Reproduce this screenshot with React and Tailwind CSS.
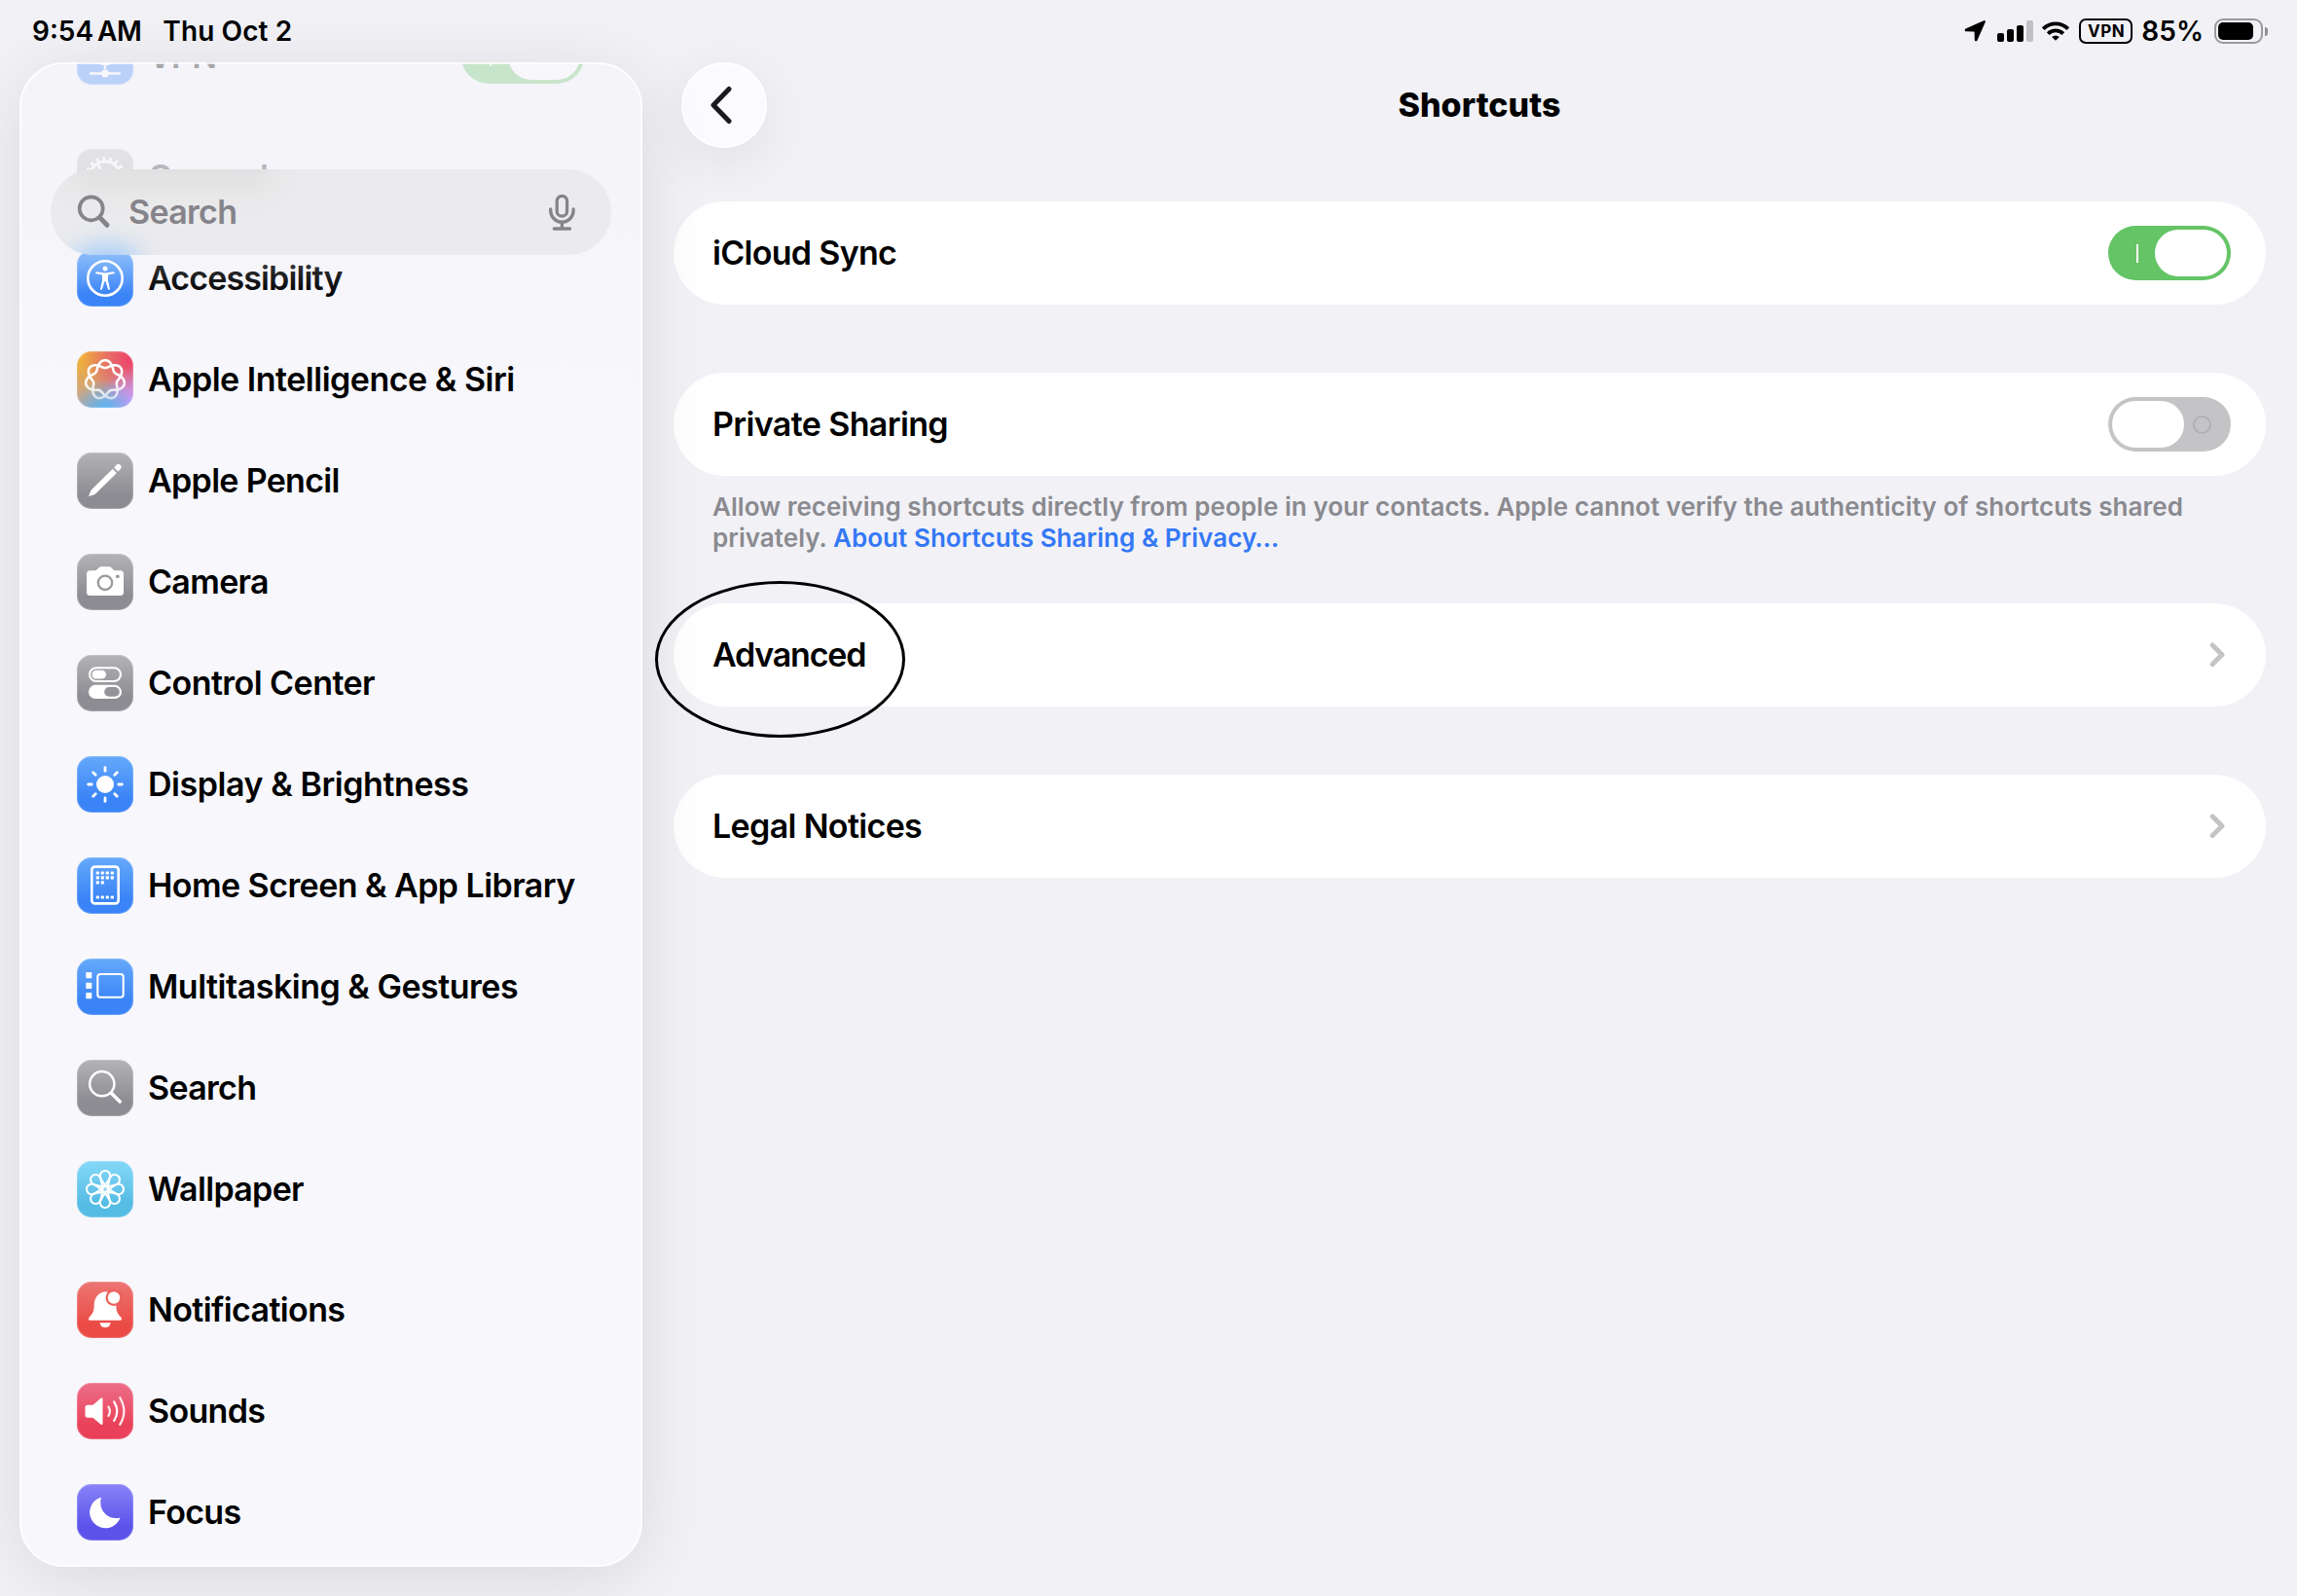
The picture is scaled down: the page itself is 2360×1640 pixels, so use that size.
import React from "react";

const GRAY = "bg-linear-to-b from-[#b3b3b7] to-[#8d8c92] to-75%";
const BLUE = "bg-linear-to-b from-[#65a9fa] to-[#3a84f7] to-75%";

function Glyph({ children }) {
  return (
    <svg viewBox="0 0 58 58" className="size-full" fill="none" stroke="none">
      {children}
    </svg>
  );
}

// Seven-lobed knot: one closed wave that runs twice around the centre.
const KNOT = (() => {
  const points = [];
  for (let i = 0; i < 280; i++) {
    const t = (i / 280) * Math.PI * 4;
    const r = 16.2 + 4 * Math.cos(3.5 * t);
    points.push(`${(29 + r * Math.sin(t)).toFixed(2)} ${(29.3 - r * Math.cos(t)).toFixed(2)}`);
  }
  return `M${points.join("L")}Z`;
})();

const ANGLES = [0, 45, 90, 135, 180, 225, 270, 315];

function VpnGlyph() {
  return (
    <Glyph>
      <g stroke="#fff" strokeWidth="2.4">
        <circle cx="29" cy="24" r="13" />
        <ellipse cx="29" cy="24" rx="6" ry="13" />
        <path d="M16 24h26M29 11v31" />
        <path d="M14 46.5h30" strokeLinecap="round" />
      </g>
      <circle cx="29" cy="46.5" r="3.9" fill="#fff" />
    </Glyph>
  );
}

function GearGlyph() {
  return (
    <Glyph>
      <g stroke="#fff">
        <circle cx="29" cy="29" r="16" strokeWidth="3" />
        <circle cx="29" cy="29" r="19" strokeWidth="4" strokeDasharray="3 3.63" />
        <path d="M29 29 21 15M29 29l-8 14M29 29h16" strokeWidth="2.6" />
      </g>
    </Glyph>
  );
}

function AccessibilityGlyph() {
  return (
    <Glyph>
      <circle cx="29" cy="29" r="17.7" stroke="#fff" strokeWidth="2.6" />
      <circle cx="29" cy="19.1" r="2.5" fill="#fff" />
      <path
        d="M20.2 22.3 29 23.6l8.8-1.3q1 0 1 .9t-.9 1L32 25.6v6l1.9 8.2q0 1-.8 1.1t-1.1-.8L29.4 32h-.8L26 40.1q-.3.9-1.1.8t-.8-1.1L26 31.6v-6l-5.9-1.4q-.9-.1-.9-1t1-.9z"
        fill="#fff"
      />
    </Glyph>
  );
}

function KnotGlyph() {
  return (
    <Glyph>
      <defs>
        <linearGradient id="knot-fade" x1="0" y1="8" x2="0" y2="50" gradientUnits="userSpaceOnUse">
          <stop offset="0" stopColor="#fff" />
          <stop offset="0.55" stopColor="#fff" stopOpacity="0.95" />
          <stop offset="1" stopColor="#fff" stopOpacity="0.6" />
        </linearGradient>
      </defs>
      <path d={KNOT} stroke="url(#knot-fade)" strokeWidth="2.6" />
    </Glyph>
  );
}

function PencilGlyph() {
  return (
    <Glyph>
      <path
        d="M12.6 44.5 15 38.6 36.6 17.3l3.9 3.8L18.6 42.6Z"
        fill="#fff"
        stroke="#fff"
        strokeWidth="0.8"
        strokeLinejoin="round"
      />
      <path d="M38.2 15.4l2.2-2.5a3 3 0 0 1 4.3 4.2l-2.5 2.3z" fill="#fff" />
    </Glyph>
  );
}

function CameraGlyph() {
  return (
    <Glyph>
      <path
        d="M13.5 17.2h5.2q1.2 0 2-.9l1.7-1.9q1.1-1.2 2.7-1.2h7.8q1.6 0 2.7 1.2l1.7 1.9q.8.9 2 .9h5.2q3.5 0 3.5 3.5v18.8q0 3.5-3.5 3.5h-31q-3.5 0-3.5-3.5V20.7q0-3.5 3.5-3.5z"
        fill="#fff"
      />
      <circle cx="29" cy="29.8" r="7.2" stroke="#9a999e" strokeWidth="2.3" />
      <circle cx="41.8" cy="23.3" r="1.9" fill="#9a999e" />
    </Glyph>
  );
}

function ControlsGlyph() {
  return (
    <Glyph>
      <rect x="13" y="13.2" width="32" height="13.8" rx="6.9" stroke="#fff" strokeWidth="2.1" />
      <rect x="15.5" y="15.8" width="14.5" height="8.6" rx="4.3" fill="#fff" />
      <rect x="12" y="30.8" width="34" height="14.2" rx="7.1" fill="#fff" />
      <rect x="28.2" y="33" width="15.6" height="9.8" rx="4.9" fill="#949398" />
    </Glyph>
  );
}

function SunGlyph() {
  return (
    <Glyph>
      <circle cx="29" cy="29" r="9" fill="#fff" />
      {ANGLES.map((a) => (
        <path
          key={a}
          d="M29 11.6v3.6"
          stroke="#fff"
          strokeWidth="2.8"
          strokeLinecap="round"
          transform={`rotate(${a} 29 29)`}
        />
      ))}
    </Glyph>
  );
}

const APP_DOTS = [
  [21.3, 16], [26.3, 16], [31.3, 16], [36.3, 16],
  [21.3, 20.9], [26.3, 20.9], [31.3, 20.9], [36.3, 20.9],
  [21.3, 25.8], [26.3, 25.8],
  [21.3, 41], [26.3, 41], [31.3, 41], [36.3, 41],
];

function HomeScreenGlyph() {
  return (
    <Glyph>
      <rect x="15.3" y="9.6" width="27.4" height="37.8" rx="3.2" stroke="#fff" strokeWidth="2.6" />
      {APP_DOTS.map(([x, y]) => (
        <rect key={`${x}-${y}`} x={x - 1.6} y={y - 1.6} width="3.2" height="3.2" rx="0.5" fill="#fff" />
      ))}
    </Glyph>
  );
}

function MultitaskGlyph() {
  return (
    <Glyph>
      <rect x="9.3" y="14" width="6" height="6.2" rx="0.8" fill="#fff" />
      <rect x="9.3" y="24.8" width="6" height="6.2" rx="0.8" fill="#fff" />
      <rect x="9.3" y="35" width="6" height="6.2" rx="0.8" fill="#fff" />
      <rect x="21.3" y="16" width="26.4" height="23.8" rx="2.8" stroke="#fff" strokeWidth="2.1" />
    </Glyph>
  );
}

function SearchGlyph() {
  return (
    <Glyph>
      <circle cx="25.8" cy="24.7" r="12.6" stroke="#fff" strokeWidth="2.5" />
      <path d="M35.6 34.4 44.2 43" stroke="#fff" strokeWidth="3.6" strokeLinecap="round" />
    </Glyph>
  );
}

function FlowerGlyph() {
  return (
    <Glyph>
      <g stroke="#fff" strokeWidth="2.1">
        {ANGLES.map((a) => (
          <path
            key={a}
            d="M0-3.5C-1.5-7.5-5.2-10-5.2-13.8a5.2 5.2 0 0 1 10.4 0C5.2-10 1.5-7.5 0-3.5Z"
            transform={`translate(29 29) rotate(${a})`}
          />
        ))}
        <circle cx="29" cy="29" r="3.3" />
      </g>
    </Glyph>
  );
}

function BellGlyph() {
  return (
    <Glyph>
      <path
        d="M29 10.2C22 11 17.8 16.8 17.7 23.8c-.1 6.7-1.4 9-4.7 12.5-1.7 1.9-1 3.5 1 3.5h30c2 0 2.7-1.6 1-3.5-3.3-3.5-4.6-5.8-4.7-12.5C40.2 16.8 36 11 29 10.2z"
        fill="#fff"
      />
      <path d="M23.6 42.2h11q-.6 4.9-5.5 4.9t-5.5-4.9z" fill="#fff" />
      <circle cx="38" cy="16.5" r="8.4" fill="#eb615d" />
      <circle cx="38" cy="16.5" r="6.2" fill="#fff" />
    </Glyph>
  );
}

function SpeakerGlyph() {
  return (
    <Glyph>
      <path
        d="M11 22.7h4.8q.8 0 1.5-.6l7-6.2q2.2-1.6 2.2.8v25q0 2.3-2.2.7l-7-6q-.7-.7-1.5-.7H11q-2.5 0-2.5-2.5v-8q0-2.5 2.5-2.5z"
        fill="#fff"
      />
      <g stroke="#fff" strokeWidth="2.2" strokeLinecap="round">
        <path d="M32.4 24.5q3 4.6 0 9.4" strokeOpacity="0.9" />
        <path d="M38.2 19.4q6.2 9.8 0 19.5" />
        <path d="M44.2 15.2q8.4 14 0 27.6" strokeOpacity="0.9" />
      </g>
    </Glyph>
  );
}

function MoonGlyph() {
  return (
    <Glyph>
      <path
        d="M24.3 13.7A16.2 16.2 0 1 0 44.6 34.6C33 37.5 21.5 28 24.9 13.8Q24.8 13.3 24.3 13.7Z"
        fill="#fff"
      />
    </Glyph>
  );
}

const SIRI_BG =
  "bg-[radial-gradient(circle_at_50%_105%,#55b4f8_0%,#55b4f800_48%),radial-gradient(circle_at_100%_88%,#cf98ff_0%,#cf98ff00_45%),radial-gradient(circle_at_98%_12%,#f03f68_0%,#f03f6800_68%),radial-gradient(circle_at_5%_8%,#f2b136_0%,#f2b13600_80%),linear-gradient(#cf8f80,#a9a9c0)]";

const ROWS = [
  { label: "VPN", bg: BLUE, Icon: VpnGlyph, toggle: true, gapAfter: true },
  { label: "General", bg: GRAY, Icon: GearGlyph },
  { label: "Accessibility", bg: BLUE, Icon: AccessibilityGlyph, tracking: "tracking-[-0.87px]" },
  { label: "Apple Intelligence & Siri", bg: SIRI_BG, Icon: KnotGlyph, tracking: "tracking-[-0.49px]" },
  { label: "Apple Pencil", bg: GRAY, Icon: PencilGlyph },
  { label: "Camera", bg: GRAY, Icon: CameraGlyph },
  { label: "Control Center", bg: GRAY, Icon: ControlsGlyph, tracking: "tracking-[-0.55px]" },
  { label: "Display & Brightness", bg: BLUE, Icon: SunGlyph, tracking: "tracking-[-0.44px]" },
  { label: "Home Screen & App Library", bg: BLUE, Icon: HomeScreenGlyph, tracking: "tracking-[-0.55px]" },
  { label: "Multitasking & Gestures", bg: BLUE, Icon: MultitaskGlyph, tracking: "tracking-[-0.49px]" },
  { label: "Search", bg: GRAY, Icon: SearchGlyph },
  { label: "Wallpaper", bg: "bg-linear-to-b from-[#84d8f8] to-[#55bce4] to-75%", Icon: FlowerGlyph, gapAfter: true },
  { label: "Notifications", bg: "bg-linear-to-b from-[#ec7572] to-[#eb4b46] to-75%", Icon: BellGlyph, tracking: "tracking-[-0.62px]" },
  { label: "Sounds", bg: "bg-linear-to-b from-[#ec6d88] to-[#ea4059] to-75%", Icon: SpeakerGlyph },
  { label: "Focus", bg: "bg-linear-to-b from-[#8a82f8] to-[#5c52ea] to-75%", Icon: MoonGlyph },
];

function Toggle({ on }) {
  return on ? (
    <span className="flex h-14 w-[126px] items-center justify-between rounded-full bg-[#65c466] pr-1 pl-[29px]">
      <span className="h-[19px] w-[2px] bg-white" />
      <span className="h-12 w-[74px] rounded-full bg-white" />
    </span>
  ) : (
    <span className="flex h-14 w-[126px] items-center justify-between rounded-full bg-[#c4c4c6] pr-[20.5px] pl-1">
      <span className="h-12 w-[74px] rounded-full bg-white" />
      <span className="size-[19px] rounded-full border-2 border-[#b1b1b3]" />
    </span>
  );
}

function SidebarRow({ label, bg, Icon, toggle, gapAfter, tracking }) {
  return (
    <li className={`flex h-[104px] shrink-0 items-center pr-[60px] pl-[59px] ${gapAfter ? "mb-5" : ""}`}>
      <span className={`size-[58px] overflow-hidden rounded-[15px] shadow-[inset_0_0_1px_1px_rgba(255,255,255,0.22)] ${bg}`}>
        <Icon />
      </span>
      <span className={`ml-[15px] flex-1 pb-[2px] whitespace-nowrap ${tracking || "tracking-[-0.68px]"}`}>{label}</span>
      {toggle && <Toggle on />}
    </li>
  );
}

function SearchField() {
  return (
    <div className="absolute top-[110px] left-8 flex h-[88px] w-[576px] items-center overflow-hidden rounded-full bg-[#ebebed] pl-[27px] text-[#85848a]">
      <span className="absolute -top-5 left-5 h-10 w-[210px] rounded-full bg-[#d8d8db]/60 blur-[14px]" />
      <span className="absolute -bottom-6 left-6 h-8 w-[66px] rounded-full bg-[#9cc8fa] blur-[13px]" />
      <svg viewBox="0 0 36 36" className="relative size-9" fill="none" stroke="currentColor">
        <circle cx="14.7" cy="14.3" r="12" strokeWidth="3.7" />
        <path d="m23.7 23.6 7.3 7.7" strokeWidth="5" strokeLinecap="round" />
      </svg>
      <span className="relative ml-[17px] flex-1 pb-[2px] tracking-[-0.68px]">Search</span>
      <svg viewBox="0 0 29 38" className="relative mr-9 h-[38px] w-[29px]" fill="none" stroke="currentColor" strokeWidth="3.3" strokeLinecap="round">
        <rect x="9.2" y="2.3" width="10.4" height="20.8" rx="5.2" />
        <path d="M2.7 15.8v1.7a11.7 11.7 0 0 0 23.4 0v-1.7M14.4 29.5v6M6.3 36h16.2" />
      </svg>
    </div>
  );
}

function Sidebar() {
  return (
    <aside className="relative z-10 ml-5 h-[1546px] w-[640px] shrink-0 rounded-[46px] bg-linear-to-b from-[#f4f4f9] to-[#f7f7fc] to-25% shadow-[0_12px_72px_rgba(0,0,0,0.1)]">
      <div className="size-full overflow-hidden rounded-[46px]">
        <ul className="-mt-[58px] flex flex-col">
          {ROWS.map((row) => (
            <SidebarRow key={row.label + row.bg} {...row} />
          ))}
        </ul>
      </div>
      <div className="pointer-events-none absolute inset-x-0 top-0 h-[240px] rounded-t-[46px] bg-linear-to-b from-[#f4f4f9]/68 via-[#f4f4f9]/76 via-50% to-[#f4f4f9]/0" />
      <div className="pointer-events-none absolute inset-0 rounded-[46px] border-2 border-white/80" />
      <SearchField />
    </aside>
  );
}

function StatusBar() {
  return (
    <header className="flex h-16 shrink-0 items-center justify-between pr-[30px] pl-[33px] text-[28px] leading-[64px] font-[620]">
      <div className="flex">
        <span>9:54</span>
        <span className="ml-[4px] tracking-[-0.5px]">AM</span>
        <span className="ml-[22px] tracking-[0.1px]">Thu Oct 2</span>
      </div>
      <div className="flex items-center">
        <svg viewBox="0 0 24 24" className="size-6">
          <path d="M21.2 1.2c1.2-.5 2 .3 1.5 1.5l-8.2 18.7c-.7 1.4-2.6 1.1-2.7-.5l-.2-7.8-.6-.6-7.9-.2c-1.6-.1-2-2-.5-2.7z" />
        </svg>
        <span className="ml-[11px] flex h-[22px] items-end gap-[3px]">
          <span className="h-[9px] w-[7px] rounded-[2px] bg-black" />
          <span className="h-[13px] w-[7px] rounded-[2px] bg-black" />
          <span className="h-[17px] w-[7px] rounded-[2px] bg-black" />
          <span className="h-[22px] w-[7px] rounded-[2px] bg-[#c1c0c5]" />
        </span>
        <svg viewBox="0 0 30 22" className="ml-2 h-[22px] w-[30px]" fill="none" stroke="#000" strokeWidth="3.8">
          <path d="M2.2 8.6a18.2 18.2 0 0 1 25.6 0M7.2 13.6a11.2 11.2 0 0 1 15.6 0" />
          <path d="m15 20.8-3.9-3.7a5.6 5.6 0 0 1 7.8 0z" fill="#000" stroke="none" />
        </svg>
        <span className="ml-[9px] flex h-[26px] w-[55px] items-center justify-center rounded-[7px] border-2 border-black text-[17px] leading-none font-bold">
          <span className="-mr-[0.6px] tracking-[0.6px]">VPN</span>
        </span>
        <span className="ml-[9px]">85%</span>
        <span className="ml-[11px] flex h-[26px] w-[50px] items-center rounded-[9px] border-2 border-[#9a9a9d] pl-[2px]">
          <span className="h-[18px] w-9 rounded-[5px] bg-black" />
        </span>
        <span className="ml-[2px] h-[9px] w-[3px] rounded-r-full bg-[#8f8f92]" />
      </div>
    </header>
  );
}

function Chevron() {
  return (
    <svg viewBox="0 0 16 26" className="mr-1.5 h-[26px] w-4" fill="none" stroke="#c4c4c6" strokeWidth="5" strokeLinecap="round" strokeLinejoin="round">
      <path d="m3.2 3 9.8 9.8L3.2 22.6" />
    </svg>
  );
}

function Card({ label, tracking, children }) {
  return (
    <div className="relative flex h-[106px] items-center justify-between rounded-full bg-white pr-9 pl-10">
      <span className={`pb-[2px] ${tracking}`}>{label}</span>
      {children}
    </div>
  );
}

function Detail() {
  return (
    <main className="ml-5 flex flex-1 flex-col">
      <div className="grid grid-cols-[1fr_auto_1fr] items-center px-5">
        <button className="flex size-[88px] items-center justify-center rounded-full border-2 border-white bg-[#fbfbff] shadow-[0_14px_60px_rgba(0,0,0,0.08)]">
          <svg viewBox="0 0 24 40" className="-ml-[6px] h-10 w-6" fill="none" stroke="#1b1b1f" strokeWidth="5" strokeLinecap="round" strokeLinejoin="round">
            <path d="M20 3.5 4 20l16 16.5" />
          </svg>
        </button>
        <h1 className="pb-[2px] text-[34px] font-extrabold">Shortcuts</h1>
      </div>
      <div className="mt-[55px] mr-8 ml-3 flex flex-col">
        <Card label="iCloud Sync" tracking="tracking-[-0.7px]">
          <Toggle on />
        </Card>
        <div className="mt-[70px]">
          <Card label="Private Sharing" tracking="tracking-[-0.63px]">
            <Toggle />
          </Card>
          <p className="mt-4 h-[115px] pl-10 text-[26px] leading-8 tracking-[0.05px] text-[#8a8a8f]">
            Allow receiving shortcuts directly from people in your contacts. Apple cannot verify the authenticity of shortcuts shared
            <br />
            privately. <a className="text-[#3478f6]">About Shortcuts Sharing &amp; Privacy…</a>
          </p>
        </div>
        <Card label="Advanced" tracking="tracking-[-1.2px]">
          <Chevron />
          <span className="absolute -top-[23px] -left-[19px] h-[161px] w-[257px] rounded-[50%] border-[3px] border-black" />
        </Card>
        <div className="mt-[70px]">
          <Card label="Legal Notices" tracking="tracking-[-0.65px]">
            <Chevron />
          </Card>
        </div>
      </div>
    </main>
  );
}

export default function App() {
  return (
    <div className="flex h-[1640px] w-[2360px] flex-col overflow-hidden bg-[#f1f1f6] font-['Inter',sans-serif] text-[34px] font-semibold text-black">
      <StatusBar />
      <div className="flex flex-1">
        <Sidebar />
        <Detail />
      </div>
    </div>
  );
}
